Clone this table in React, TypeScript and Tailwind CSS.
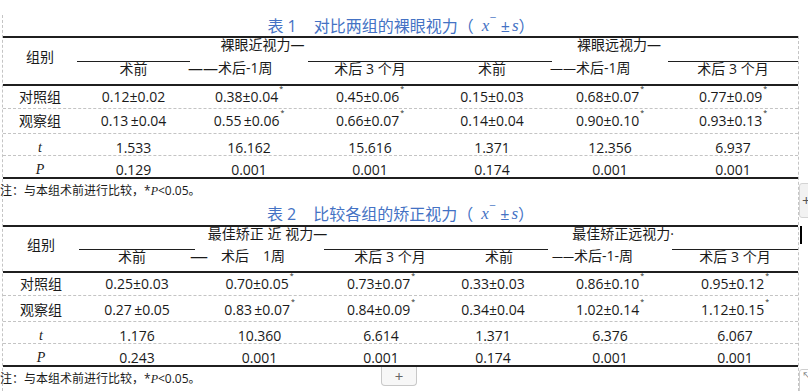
import React from 'react';

const sans = "font-['Open_Sans','Noto_Sans_CJK_SC',sans-serif]";
const serif = "font-['Liberation_Serif','Noto_Serif_CJK_SC',serif]";

// tiny raised asterisk after significant values
const Star = () => (
  <span className="relative -top-[5px] ml-px text-[7px] leading-none">*</span>
);

const Val = ({ v }: { v: string }) =>
  v.endsWith('*') ? (
    <>
      {v.slice(0, -1)}
      <Star />
    </>
  ) : (
    <>{v}</>
  );

const Ital = ({ s }: { s: string }) => (
  <span className={`${serif} italic`}>{s}</span>
);

const Title = ({ n, text }: { n: string; text: string }) => (
  <div className="flex h-full items-center justify-center text-[16px] leading-[16px] text-[#4472c4]">
    <span>表 {n}</span>
    <span className="ml-[17px]">{text}（</span>
    <span className={`${serif} ml-[8px] text-[17px] italic`}>x</span>
    <span className="-mt-[8px] ml-[1px] text-[11px]">¯</span>
    <span className="ml-[5px]">±</span>
    <span className={`${serif} ml-[2px] text-[17px] italic`}>s</span>
    <span>）</span>
  </div>
);

const Note = ({ h }: { h: string }) => (
  <div className={`${h} -ml-[3px] flex items-center text-[12px] leading-[12px]`}>
    注：与本组术前进行比较，*<Ital s="P" />&lt;0.05。
  </div>
);

type TableDef = {
  grid: string;
  headRows: string;
  groupPad: string;
  near: React.ReactNode;
  far: React.ReactNode;
  subs: React.ReactNode[];
  rowCls: string[];
  rows: { label: React.ReactNode; vals: string[] }[];
};

const line = 'border-t border-[#1f1f1f]';

const T1: TableDef = {
  grid: 'grid-cols-[74px_113px_118px_124px_120px_116px_130px]',
  headRows: 'grid-rows-[23px_23px]',
  groupPad: 'pt-[12px]',
  near: <span className="pl-[16px]">裸眼近视力—</span>,
  far: <span className="pl-[8px]">裸眼远视力—</span>,
  subs: [
    <div className={`${line} flex justify-center`}>术前</div>,
    <div className="-ml-[2px] flex">
      <span className="text-[15px]">——</span>术后-1周
    </div>,
    <div className={`${line} flex justify-center`}>术后 3 个月</div>,
    <div className={`${line} flex justify-center`}>术前</div>,
    <div className="-ml-[2px] flex">
      <span className="text-[13px]">——</span>术后-1周
    </div>,
    <div className={`${line} flex justify-center`}>术后 3 个月</div>,
  ],
  rowCls: [
    'h-[23px] items-center border-b',
    'h-[25px] items-center border-b',
    'h-[22px] items-start pt-[7px] border-b',
    'h-[21px] items-start pt-[7px]',
  ],
  rows: [
    { label: '对照组', vals: ['0.12±0.02', '0.38±0.04*', '0.45±0.06*', '0.15±0.03', '0.68±0.07*', '0.77±0.09*'] },
    { label: '观察组', vals: ['0.13\u2009±0.04', '0.55\u2009±0.06*', '0.66±0.07*', '0.14±0.04', '0.90±0.10*', '0.93±0.13*'] },
    { label: <Ital s="t" />, vals: ['1.533', '16.162', '15.616', '1.371', '12.356', '6.937'] },
    { label: <Ital s="P" />, vals: ['0.129', '0.001', '0.001', '0.174', '0.001', '0.001'] },
  ],
};

const T2: TableDef = {
  grid: 'grid-cols-[76px_116px_129px_114px_110px_124px_126px]',
  headRows: 'grid-rows-[22px_22px]',
  groupPad: 'pt-[11px]',
  near: <span className="pl-[18px]">最佳矫正 近 视力—</span>,
  far: <span className="pl-[10px]">最佳矫正远视力·</span>,
  subs: [
    <div className={`${line} flex justify-center pr-[10px]`}>术前</div>,
    <div className="-ml-[5px] flex">
      <span className="text-[18px] leading-[14px]">—</span>
      <span className="ml-[13px]">术后</span>
      <span className="ml-[14px]">1周</span>
    </div>,
    <div className={`${line} flex justify-center pl-[18px]`}>术后 3 个月</div>,
    <div className={`${line} flex justify-center pl-[12px]`}>术前</div>,
    <div className="ml-[4px] flex">
      <span className="text-[11px]">——</span>术后-1-周
    </div>,
    <div className={`${line} flex justify-center`}>术后 3 个月</div>,
  ],
  rowCls: [
    'h-[23px] items-center border-b',
    'h-[26px] items-start pt-[7px] border-b',
    'h-[22px] items-start pt-[7px] border-b',
    'h-[21px] items-start pt-[7px]',
  ],
  rows: [
    { label: '对照组', vals: ['0.25±0.03', '0.70±0.05*', '0.73±0.07*', '0.33±0.03', '0.86±0.10*', '0.95±0.12*'] },
    { label: '观察组', vals: ['0.27\u2009±0.05', '0.83\u2009±0.07*', '0.84±0.09*', '0.34±0.04', '1.02±0.14*', '1.12±0.15*'] },
    { label: <Ital s="t" />, vals: ['1.176', '10.360', '6.614', '1.371', '6.376', '6.067'] },
    { label: <Ital s="P" />, vals: ['0.243', '0.001', '0.001', '0.174', '0.001', '0.001'] },
  ],
};

const StatTable = ({ t }: { t: TableDef }) => (
  <div className="border-y-2 border-[#1f1f1f] text-[14px] leading-[14px]">
    {/* two-level header */}
    <div className={`grid ${t.grid} ${t.headRows}`}>
      <div className={`row-span-2 flex justify-center ${t.groupPad}`}>组别</div>
      <div className="col-span-3 flex justify-center">{t.near}</div>
      <div className="col-span-3 flex justify-center">{t.far}</div>
      {t.subs.map((s, i) => (
        <React.Fragment key={i}>{s}</React.Fragment>
      ))}
    </div>
    <div className="border-t-2 border-[#1f1f1f]">
      {t.rows.map((r, i) => (
        <div
          key={i}
          className={`grid ${t.grid} border-dashed border-[#c4c4c4] ${t.rowCls[i]}`}
        >
          <div className="flex justify-center">{r.label}</div>
          {r.vals.map((v, j) => (
            <div key={j} className="flex justify-center whitespace-nowrap">
              <Val v={v} />
            </div>
          ))}
        </div>
      ))}
    </div>
  </div>
);

export default function App() {
  return (
    <div className={`relative h-[391px] w-[808px] overflow-hidden bg-white text-[#1a1a1a] ${sans}`}>
      <div className="pt-[15px]">
        <div className="ml-[2px] w-[797px] border-l border-dashed border-[#c4c4c4]">
          <div className="h-[21px]">
            <Title n="1" text="对比两组的裸眼视力" />
          </div>
          <div className="border-r border-dashed border-[#c4c4c4]">
            <StatTable t={T1} />
            <Note h="h-[23px]" />
            <div className="h-[23px]">
              <Title n="2" text="比较各组的矫正视力" />
            </div>
            <StatTable t={T2} />
            <Note h="h-[24px]" />
          </div>
        </div>
      </div>

      {/* editor widgets floating over the page */}
      <div className="absolute left-[381px] top-[367px] flex h-[19px] w-[36px] items-center justify-center rounded-b-[4px] border border-t-0 border-[#c8c8c8] bg-[#f7f7f7] text-[15px] leading-none text-[#666]">
        +
      </div>
      <div className="absolute left-[799px] top-[183px] flex h-[35px] w-[14px] items-center rounded-l-[3px] border border-[#d4d4d4] bg-[#f2f2f2] pl-[2px] text-[15px] leading-none text-[#555]">
        +
      </div>
      <div className="absolute left-[800px] top-[226px] h-[18px] w-[2px] bg-black" />
      <div className="absolute left-[799px] top-[369px] flex h-[26px] w-[14px] items-start rounded-tl-[3px] border border-[#cfcfcf] bg-white pl-[2px] pt-[1px] text-[9px] leading-none text-[#777]">
        ↖
      </div>
    </div>
  );
}
